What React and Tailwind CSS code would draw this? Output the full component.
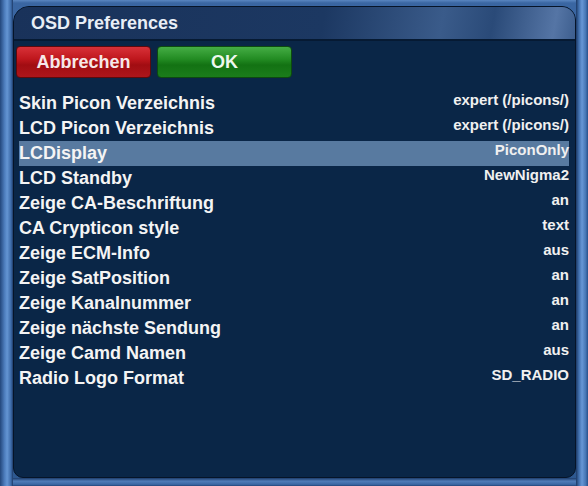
import React from 'react'

const rows = [
  ['Skin Picon Verzeichnis', 'expert (/picons/)'],
  ['LCD Picon Verzeichnis', 'expert (/picons/)'],
  ['LCDisplay', 'PiconOnly'],
  ['LCD Standby', 'NewNigma2'],
  ['Zeige CA-Beschriftung', 'an'],
  ['CA Crypticon style', 'text'],
  ['Zeige ECM-Info', 'aus'],
  ['Zeige SatPosition', 'an'],
  ['Zeige Kanalnummer', 'an'],
  ['Zeige nächste Sendung', 'an'],
  ['Zeige Camd Namen', 'aus'],
  ['Radio Logo Format', 'SD_RADIO'],
]

export default function App() {
  const selected = 2

  return (
    <div className="w-[588px] h-[486px] flex bg-[#3463a0] font-['Liberation_Sans',Arial,sans-serif] font-bold overflow-hidden">
      {/* left frame bar */}
      <div className="w-[13px] bg-[linear-gradient(to_right,#23477c,#4d7dbd_35%,#6495d3_55%,#3c6aa8_85%,#1d3a66)]" />

      <div className="flex-1 flex flex-col bg-[linear-gradient(to_bottom,#5a86c0,#3a66a2_3px,#2d5890)]">
        <div className="h-[6px]" />

        <div className="flex-1 flex flex-col bg-[#0a2647] border border-[#061428] rounded-tl-[16px] rounded-tr-[14px] rounded-b-[10px] overflow-hidden">
          {/* title bar */}
          <div className="h-[34px] shrink-0 px-[17px] pt-[5px] border-b-2 border-[#061a33] bg-[linear-gradient(100deg,#19325a_0%,#1c3862_55%,#3a5b8a_76%,#2a4a78_85%,#5575a5_96%,#3d5e8e_100%)]">
            <span className="text-[18px] leading-[20px] text-[#e8eef6]">OSD Preferences</span>
          </div>

          {/* buttons */}
          <div className="flex gap-[6px] mt-[5px] ml-[2px]">
            <div className="w-[135px] h-[32px] flex items-center justify-center rounded-[4px] border border-[#5c0a0d] bg-[linear-gradient(to_bottom,#d83138_0%,#bf171d_40%,#a10d12_60%,#ad161b_100%)] text-[18px] text-[#f6e8e8]">
              Abbrechen
            </div>
            <div className="w-[135px] h-[32px] flex items-center justify-center rounded-[4px] border border-[#0d4a10] bg-[linear-gradient(to_bottom,#45ad45_0%,#238c23_40%,#137213_60%,#1b7d1b_100%)] text-[18px] text-[#eef8ee]">
              OK
            </div>
          </div>

          {/* settings list */}
          <div className="flex flex-col mt-[13px] pl-[5px] pr-[6px]">
            {rows.map(([label, value], i) => (
              <div
                key={label}
                className={`h-[25px] flex justify-between ${i === selected ? 'bg-[#587aa0]' : ''}`}
              >
                <span className="text-[18px] leading-[24px] text-[#f4f4f4]">{label}</span>
                <span className="text-[15px] leading-[17px] text-[#f0f0f0]">{value}</span>
              </div>
            ))}
          </div>
        </div>

        <div className="h-[8px] bg-[linear-gradient(to_bottom,#1d3c6b,#4f7cb8_40%,#3a67a3_80%,#23467a)]" />
      </div>

      {/* right frame bar */}
      <div className="w-[12px] bg-[linear-gradient(to_right,#1d3a66,#4170ae_25%,#6797d6_50%,#4777b6_80%,#27508a)]" />
    </div>
  )
}
